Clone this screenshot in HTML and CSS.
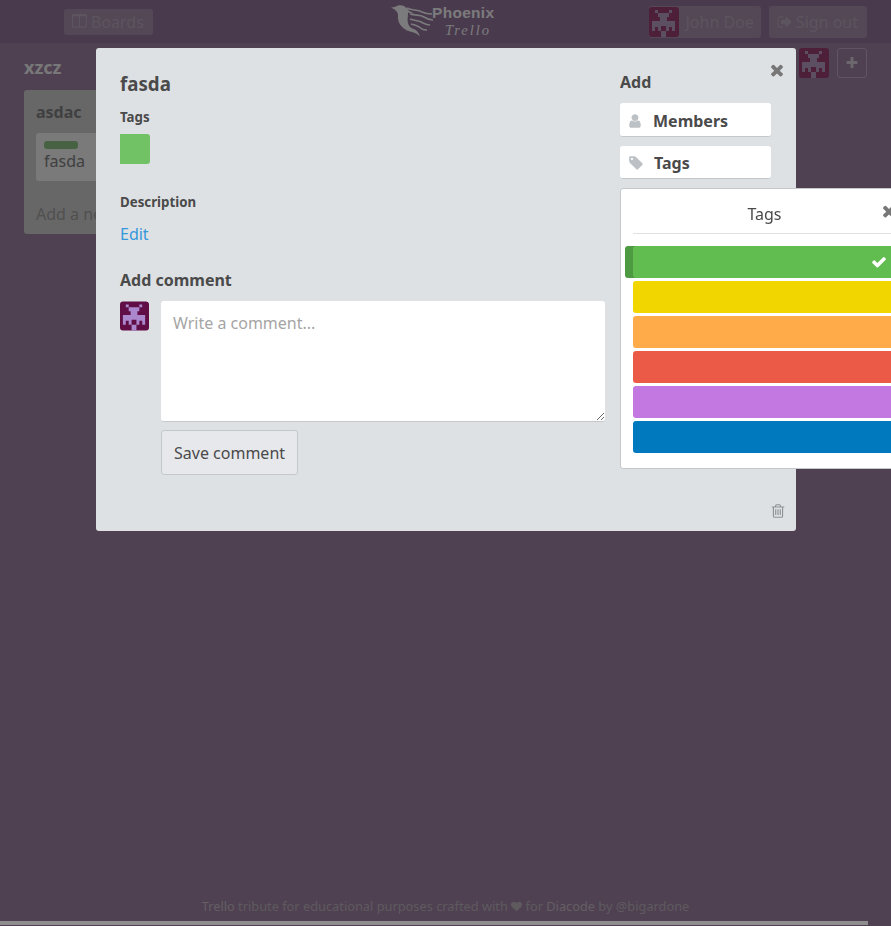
FILE: index.html
```html
<!DOCTYPE html>
<html lang="en">

<head>
    <meta charset="UTF-8">
    <title>Phoenix Trello</title>
    <link rel="stylesheet" href="styles.css">
</head>

<body>

    <svg class="sprites" xmlns="http://www.w3.org/2000/svg">
        <symbol id="avatar" viewBox="0 0 30 30">
            <rect class="avatar-bg" width="30" height="30" rx="3" />
            <path class="avatar-fg" d="M6 3h3v3H6zM20 3h3v3h-3zM9 6h11v4H9zM11 10h7v4h-7zM3 14h23v10h-3v-4h-3v4h-3v-5h-5v5H9v-4H6v4H3zM12 24h5v6h-5z" />
        </symbol>
        <symbol id="i-times" viewBox="0 0 1792 1792">
            <path d="M1490 1322q0 40-28 68l-136 136q-28 28-68 28t-68-28l-294-294-294 294q-28 28-68 28t-68-28l-136-136q-28-28-28-68t28-68l294-294-294-294q-28-28-28-68t28-68l136-136q28-28 68-28t68 28l294 294 294-294q28-28 68-28t68 28l136 136q28 28 28 68t-28 68l-294 294 294 294q28 28 28 68z" />
        </symbol>
    </svg>

    <header class="topbar">
        <nav class="topbar-left">
            <a class="nav-btn">
                <svg class="icon" viewBox="0 0 1792 1792"><path d="M160 1408h608v-1152h-640v1120q0 13 9.5 22.5t22.5 9.5zm1376-32v-1120h-640v1152h608q13 0 22.5-9.5t9.5-22.5zm128-1216v1216q0 66-47 113t-113 47h-1344q-66 0-113-47t-47-113v-1216q0-66 47-113t113-47h1344q66 0 113 47t47 113z" /></svg>
                Boards
            </a>
        </nav>
        <div class="logo">
            <svg class="logo-bird" viewBox="0 0 46 36">
                <path d="M0 3.5c3 .2 5-1 7-2 3-1 7 0 9 3 2 3 5 4 8 5-3 0-5 0-7-1 0 5-1 8 0 11 1 3 3 5 7 6 2 1 4 4 5 7-3-3-6-4-10-5C11 25 6 19 7 11 7 8 4 5 0 3.5z" />
                <path class="logo-feathers" d="M16 4c5 3 10 1 15 4 4 2 7 2 10 2M19 10c6 2 10 0 14 3 3 2 6 3 9 3M19 15c5 2 9 1 13 4 2 1 5 2 7 2M20 20c4 1 8 2 11 5 1 1 3 1 5 1" />
            </svg>
            <div class="logo-text">
                <span class="logo-name">Phoenix</span>
                <span class="logo-sub">Trello</span>
            </div>
        </div>
        <nav class="topbar-right">
            <a class="nav-btn nav-user">
                <svg class="avatar avatar-dim"><use href="#avatar" /></svg>
                John Doe
            </a>
            <a class="nav-btn">
                <svg class="icon" viewBox="0 0 1792 1792"><path d="M704 1440q0 4 1 20t.5 26.5-3 23.5-10 19.5-20.5 6.5h-320q-119 0-203.5-84.5t-84.5-203.5v-704q0-119 84.5-203.5t203.5-84.5h320q13 0 22.5 9.5t9.5 22.5q0 4 1 20t.5 26.5-3 23.5-10 19.5-20.5 6.5h-320q-66 0-113 47t-47 113v704q0 66 47 113t113 47h312l11.5 1 11.5 3 8 5.5 7 9 2 13.5zm928-544q0 26-19 45l-544 544q-19 19-45 19t-45-19-19-45v-288h-448q-26 0-45-19t-19-45v-384q0-26 19-45t45-19h448v-288q0-26 19-45t45-19 45 19l544 544q19 19 19 45z" /></svg>
                Sign out
            </a>
        </nav>
    </header>

    <main class="board">
        <div class="board-head">
            <h2 class="board-title">xzcz</h2>
            <div class="board-members">
                <svg class="avatar avatar-dim"><use href="#avatar" /></svg>
                <a class="add-member">
                    <svg class="icon" viewBox="0 0 1792 1792"><path d="M1600 736v192q0 40-28 68t-68 28h-416v416q0 40-28 68t-68 28h-192q-40 0-68-28t-28-68v-416h-416q-40 0-68-28t-28-68v-192q0-40 28-68t68-28h416v-416q0-40 28-68t68-28h192q40 0 68 28t28 68v416h416q40 0 68 28t28 68z" /></svg>
                </a>
            </div>
        </div>
        <section class="list">
            <h3 class="list-title">asdac</h3>
            <div class="card">
                <span class="card-tag"></span>
                <div>fasda</div>
            </div>
            <a class="add-card">Add a new</a>
        </section>
    </main>

    <footer class="credits">
        <a class="credits-link">Trello</a> tribute for educational purposes crafted with
        <svg class="icon" viewBox="0 0 1792 1792"><path d="M896 1664q-26 0-44-18l-624-602q-10-8-27.5-26t-55.5-65.5-68-97.5-53.5-121-23.5-138q0-220 127-344t351-124q62 0 126.5 21.5t120 58 95.5 68.5 76 68q36-36 76-68t95.5-68.5 120-58 126.5-21.5q224 0 351 124t127 344q0 221-229 450l-623 600q-18 18-44 18z" /></svg>
        for <a class="credits-link">Diacode</a> by @bigardone
    </footer>

    <div class="overlay"></div>

    <div class="modal">
        <a class="modal-close"><svg class="icon"><use href="#i-times" /></svg></a>

        <div class="modal-main">
            <h3 class="modal-title">fasda</h3>

            <h5 class="field-label">Tags</h5>
            <div class="tag-swatch"></div>

            <h5 class="field-label field-description">Description</h5>
            <a class="edit-link">Edit</a>

            <h4 class="comment-title">Add comment</h4>
            <form class="comment-form">
                <svg class="avatar"><use href="#avatar" /></svg>
                <div class="comment-fields">
                    <textarea placeholder="Write a comment..."></textarea>
                    <button type="button">Save comment</button>
                </div>
            </form>
        </div>

        <aside class="modal-side">
            <h4 class="side-title">Add</h4>
            <a class="side-btn">
                <svg class="icon icon-user" viewBox="0 0 1792 1792"><path d="M1536 1399q0 109-62.5 187t-150.5 78h-854q-88 0-150.5-78t-62.5-187q0-85 8.5-160.5t31.5-152 58.5-131 94-89 134.5-34.5q131 128 313 128t313-128q76 0 134.5 34.5t94 89 58.5 131 31.5 152 8.5 160.5zm-256-887q0 159-112.5 271.5t-271.5 112.5-271.5-112.5-112.5-271.5 112.5-271.5 271.5-112.5 271.5 112.5 112.5 271.5z" /></svg>
                Members
            </a>
            <a class="side-btn">
                <svg class="icon" viewBox="0 0 1792 1792"><path d="M576 448q0-53-37.5-90.5t-90.5-37.5-90.5 37.5-37.5 90.5 37.5 90.5 90.5 37.5 90.5-37.5 37.5-90.5zm1067 576q0 53-37 90l-491 492q-39 37-91 37-53 0-90-37l-715-716q-38-37-64.5-101t-26.5-117v-416q0-52 38-90t90-38h416q53 0 117 26.5t102 64.5l715 714q37 39 37 91z" /></svg>
                Tags
            </a>

            <div class="popover">
                <div class="popover-head">
                    Tags
                    <a class="popover-close"><svg class="icon"><use href="#i-times" /></svg></a>
                </div>
                <ul class="tag-list">
                    <li class="tag tag-green selected">
                        <svg class="icon" viewBox="0 0 1792 1792"><path d="M1671 566q0 40-28 68l-724 724-136 136q-28 28-68 28t-68-28l-136-136-362-362q-28-28-28-68t28-68l136-136q28-28 68-28t68 28l294 295 656-657q28-28 68-28t68 28l136 136q28 28 28 68z" /></svg>
                    </li>
                    <li class="tag tag-yellow"></li>
                    <li class="tag tag-orange"></li>
                    <li class="tag tag-red"></li>
                    <li class="tag tag-purple"></li>
                    <li class="tag tag-blue"></li>
                </ul>
            </div>
        </aside>

        <a class="modal-trash">
            <svg class="icon" viewBox="0 0 1792 1792"><path d="M704 736v576q0 14-9 23t-23 9h-64q-14 0-23-9t-9-23v-576q0-14 9-23t23-9h64q14 0 23 9t9 23zm256 0v576q0 14-9 23t-23 9h-64q-14 0-23-9t-9-23v-576q0-14 9-23t23-9h64q14 0 23 9t9 23zm256 0v576q0 14-9 23t-23 9h-64q-14 0-23-9t-9-23v-576q0-14 9-23t23-9h64q14 0 23 9t9 23zm128 724v-948h-896v948q0 22 7 40.5t14.5 27 10.5 8.5h832q3 0 10.5-8.5t14.5-27 7-40.5zm-672-1076h448l-48-117q-7-9-17-11h-317q-10 2-17 11zm928 32v64q0 14-9 23t-23 9h-96v948q0 83-47 143.5t-113 60.5h-832q-66 0-113-58.5t-47-141.5v-952h-96q-14 0-23-9t-9-23v-64q0-14 9-23t23-9h309l70-167q15-37 54-63t79-26h320q40 0 79 26t54 63l70 167h309q14 0 23 9t9 23z" /></svg>
        </a>
    </div>

    <div class="scrollbar"></div>

</body>

</html>
```

FILE: styles.css
```css
* {
    box-sizing: border-box;
}

html,
body {
    height: 100%;
}

body {
    display: flex;
    flex-direction: column;
    margin: 0;
    overflow: hidden;
    font-family: "Noto Sans", "Open Sans", sans-serif;
    font-size: 16px;
    color: #4a4a4a;
    background: #9e82a4;
}

h2,
h3,
h4,
h5,
ul {
    margin: 0;
    padding: 0;
}

.sprites {
    display: none;
}

.icon {
    width: 1em;
    height: 1em;
    fill: currentColor;
    flex: none;
}

.avatar {
    --avatar-bg: #600e45;
    --avatar-fg: #ab87cd;
    display: block;
    width: 30px;
    height: 30px;
    flex: none;
}

.avatar-dim {
    --avatar-bg: #9a3f72;
    --avatar-fg: #b89ec4;
}

.avatar-bg {
    fill: var(--avatar-bg);
}

.avatar-fg {
    fill: var(--avatar-fg);
}

/* top bar */

.topbar {
    display: grid;
    grid-template-columns: 367px auto 1fr;
    align-items: center;
    height: 43px;
    padding: 0 24px;
    background: #94749a;
}

.topbar-left {
    padding-left: 40px;
}

.topbar-right {
    display: flex;
    justify-content: flex-end;
    gap: 8px;
}

.nav-btn {
    display: inline-flex;
    align-items: center;
    gap: 3px;
    height: 26px;
    padding: 0 9px 0 8px;
    border-radius: 3px;
    font-size: 16px;
    color: #b8a8bc;
    background: #a890ad;
}

.topbar-right .nav-btn {
    height: 32px;
}

.nav-user {
    gap: 6px;
    padding: 0 7px 0 0;
}

.nav-btn .icon {
    font-size: 16px;
}

.logo {
    display: flex;
    align-items: center;
    width: 104px;
    color: #f6f6fa;
}

.logo-bird {
    width: 46px;
    height: 36px;
    fill: currentColor;
    flex: none;
}

.logo-feathers {
    fill: none;
    stroke: currentColor;
    stroke-width: 1.6;
}

.logo-text {
    display: flex;
    flex-direction: column;
    margin-left: -5px;
}

.logo-name {
    font-family: "Liberation Sans", sans-serif;
    font-size: 15.5px;
    font-weight: 700;
    letter-spacing: 0.3px;
}

.logo-sub {
    padding-left: 13px;
    font-family: "Liberation Serif", serif;
    font-style: italic;
    font-size: 14.5px;
    letter-spacing: 2px;
}

/* board */

.board {
    flex: 1;
    padding: 5px 24px 0;
}

.board-head {
    display: flex;
    justify-content: space-between;
    align-items: flex-start;
    height: 42px;
}

.board-title {
    padding-top: 6px;
    font-size: 18px;
    line-height: 26px;
    color: #f0f0f0;
}

.board-members {
    display: flex;
    gap: 8px;
}

.add-member {
    display: flex;
    align-items: center;
    justify-content: center;
    width: 30px;
    height: 30px;
    border: 1px solid #c0a8c6;
    border-radius: 3px;
    color: #d8cddb;
}

.add-member .icon {
    font-size: 14px;
}

.list {
    width: 270px;
    height: 144px;
    padding: 12px;
    border-radius: 3px;
    background: #cfcfcf;
}

.list-title {
    font-size: 16px;
    line-height: 20px;
    color: #808080;
}

.card {
    height: 48px;
    margin-top: 11px;
    padding: 8px;
    border-radius: 3px;
    line-height: 22px;
    color: #808080;
    background: #f4f4f4;
}

.card-tag {
    display: block;
    width: 34px;
    height: 8px;
    margin-bottom: 1px;
    border-radius: 3px;
    background: #8fc587;
}

.add-card {
    display: block;
    margin-top: 22px;
    line-height: 22px;
    color: #a0a0a0;
}

.credits {
    height: 40px;
    font-size: 12.8px;
    line-height: 40px;
    text-align: center;
    color: #bcb4bc;
}

.credits-link {
    color: #c6bec6;
}

.credits .icon {
    font-size: 11px;
    vertical-align: -1px;
}

/* modal */

.overlay {
    position: fixed;
    inset: 0;
    background: rgba(0, 0, 0, 0.5);
}

.modal {
    position: absolute;
    top: 48px;
    left: 96px;
    display: flex;
    gap: 15px;
    width: 700px;
    height: 483px;
    padding: 24px;
    border-radius: 3px;
    background: #dee1e4;
}

.modal-close {
    position: absolute;
    top: 13px;
    right: 10px;
    font-size: 18px;
    line-height: 0;
    color: #777;
}

.modal-trash {
    position: absolute;
    right: 10px;
    bottom: 12px;
    font-size: 16px;
    line-height: 0;
    color: #8f9294;
}

.modal-main {
    width: 485px;
}

.modal-title {
    font-size: 18.72px;
    line-height: 24px;
}

.field-label {
    margin-top: 12px;
    font-size: 13.28px;
    line-height: 18px;
}

.tag-swatch {
    width: 30px;
    height: 30px;
    margin-top: 8px;
    border-radius: 0 3px 3px 0;
    background: #70c265;
}

.field-description {
    margin-top: 29px;
}

.edit-link {
    display: block;
    margin-top: 12px;
    line-height: 22px;
    color: #3498db;
}

.comment-title {
    margin-top: 24px;
    font-size: 16px;
    line-height: 22px;
}

.comment-form {
    display: flex;
    gap: 12px;
    margin-top: 10px;
}

.comment-form .avatar {
    width: 29px;
}

.comment-fields {
    flex: 1;
}

textarea {
    display: block;
    width: 100%;
    height: 121px;
    padding: 11px 12px;
    border: 0;
    border-bottom: 1px solid #c4c8cb;
    border-radius: 3px;
    font: inherit;
    color: #4a4a4a;
    background: #fff;
}

textarea::placeholder {
    color: #a5a5a5;
}

button {
    height: 45px;
    margin-top: 8px;
    padding: 0 12px;
    border: 1px solid #c4c8cb;
    border-radius: 3px;
    font: inherit;
    color: #4a4a4a;
    background: #e7e8ec;
}

.modal-side {
    position: relative;
    width: 151px;
}

.side-title {
    margin-top: -1px;
    font-size: 16px;
    line-height: 22px;
}

.side-btn {
    display: flex;
    align-items: center;
    gap: 9px;
    height: 34px;
    margin-top: 10px;
    padding: 2px 8px 0;
    border-bottom: 1px solid #c4c8cb;
    border-radius: 3px;
    font-weight: 700;
    background: #fff;
}

.side-btn + .side-btn {
    gap: 10px;
    height: 33px;
    margin-top: 9px;
    padding-top: 1px;
}

.side-btn .icon {
    font-size: 16px;
    color: #bcc1c5;
}

.side-btn .icon-user {
    margin: 0 1px 0 -1px;
}

.popover {
    position: absolute;
    top: 116px;
    left: 0;
    width: 289px;
    height: 281px;
    padding: 0 12px;
    border: 1px solid #c4c8cb;
    border-radius: 3px;
    background: #fff;
}

.popover-head {
    position: relative;
    height: 45px;
    border-bottom: 1px solid #dfe2e4;
    text-align: center;
    line-height: 50px;
}

.popover-close {
    position: absolute;
    top: 13px;
    left: 247px;
    font-size: 18px;
    line-height: 0;
    color: #777;
}

.tag-list {
    display: flex;
    flex-direction: column;
    gap: 3px;
    margin-top: 12px;
    list-style: none;
}

.tag {
    display: flex;
    align-items: center;
    justify-content: flex-end;
    height: 32px;
    padding-right: 9px;
    border-radius: 3px;
    color: #fff;
}

.tag.selected {
    box-shadow: -8px 0 0 #4e9a42;
}

.tag-green {
    background: #61bd4f;
}

.tag-yellow {
    background: #f2d600;
}

.tag-orange {
    background: #ffab4a;
}

.tag-red {
    background: #eb5a46;
}

.tag-purple {
    background: #c377e0;
}

.tag-blue {
    background: #0079bf;
}

/* thin scrollbar of the page */

.scrollbar {
    position: fixed;
    left: 0;
    bottom: 1px;
    width: 868px;
    height: 4px;
    background: #8e8e8e;
}
```
